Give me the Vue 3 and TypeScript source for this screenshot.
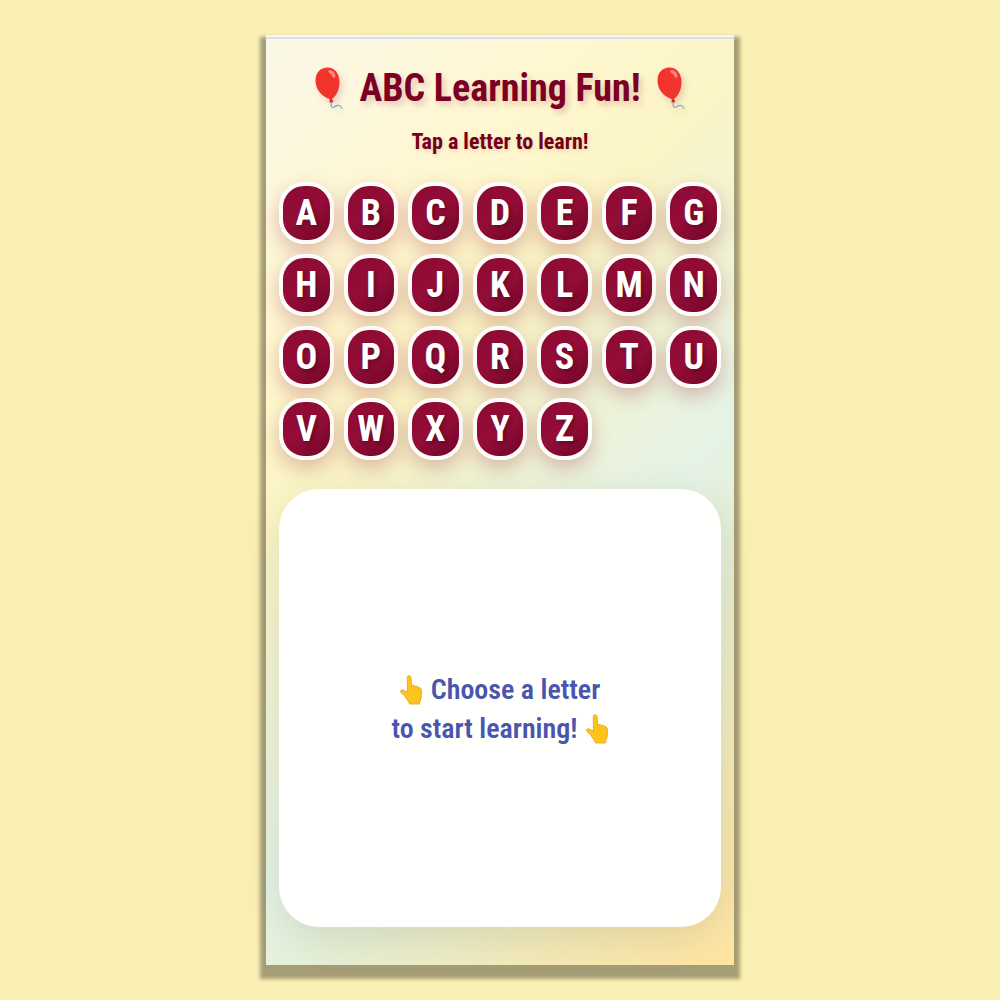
<script setup lang="ts">
import { ref } from 'vue'

const letters: string[] = 'ABCDEFGHIJKLMNOPQRSTUVWXYZ'.split('')
const selected = ref<string | null>(null)
</script>

<template>
  <main class="page">
    <div class="panel">
      <header class="header">
        <h1 class="title">
          <svg class="balloon" viewBox="0 0 28 42" aria-hidden="true">
            <path d="M14.800 31.500 L16.800 31.500 L18.500 35 L14.500 35.800 Z" fill="#d32a25" />
            <path d="M12.500 0.500 C19.500 0.500 24.500 6.500 24.500 15 C24.500 23 21 30 16 32.500 C8 30.500 0.500 23.500 0.500 13.500 C0.500 5.500 5.500 0.500 12.500 0.500 Z" fill="#f2352c" />
            <path d="M13.500 3.500 C17 2.600 20.500 5.500 20.300 9.500 C20 11.500 18 11 17.300 9 C16.500 6.500 12 5.500 13.500 3.500 Z" fill="#ff8b80" />
            <path d="M16.500 35.500 C15.500 39 16.500 41 19 40 C21 39 22 37.800 24 38.500 C26 39.200 26 40.500 27 41.200" fill="none" stroke="#6da9d4" stroke-width="1.200" stroke-linecap="round" />
          </svg>
          <span>ABC Learning Fun!</span>
          <svg class="balloon" viewBox="0 0 28 42" aria-hidden="true">
            <path d="M14.800 31.500 L16.800 31.500 L18.500 35 L14.500 35.800 Z" fill="#d32a25" />
            <path d="M12.500 0.500 C19.500 0.500 24.500 6.500 24.500 15 C24.500 23 21 30 16 32.500 C8 30.500 0.500 23.500 0.500 13.500 C0.500 5.500 5.500 0.500 12.500 0.500 Z" fill="#f2352c" />
            <path d="M13.500 3.500 C17 2.600 20.500 5.500 20.300 9.500 C20 11.500 18 11 17.300 9 C16.500 6.500 12 5.500 13.500 3.500 Z" fill="#ff8b80" />
            <path d="M16.500 35.500 C15.500 39 16.500 41 19 40 C21 39 22 37.800 24 38.500 C26 39.200 26 40.500 27 41.200" fill="none" stroke="#6da9d4" stroke-width="1.200" stroke-linecap="round" />
          </svg>
        </h1>
        <p class="subtitle">Tap a letter to learn!</p>
      </header>

      <div class="grid">
        <button
          v-for="letter in letters"
          :key="letter"
          type="button"
          class="letter"
          @click="selected = letter"
        >
          {{ letter }}
        </button>
      </div>

      <section class="card" aria-live="polite">
        <p v-if="selected" class="chosen">{{ selected }}</p>
        <p v-else class="prompt">
          <span class="line">
            <svg class="hand" viewBox="0 0 22 30" aria-hidden="true">
              <path d="M7.300 2.500 C7.300 0.300 10.800 0.300 11 2.500 L11.700 11 C14 10 15.200 10.600 15.600 11.600 C17.500 11 18.600 11.800 18.900 12.800 C20.700 12.800 21.500 14 21.500 16 L21.200 22 C21 24.500 19.800 25.500 19.500 29 L9.500 29 C9 26.500 6.500 24.500 4.500 20.500 L1 17.500 C-0.200 16 1.200 14.300 3 15 L7.500 17.200 Z" fill="#ffc41c" stroke="#e2a019" stroke-width="0.800" stroke-linejoin="round" />
              <path d="M11.700 11 L11.900 14 M15.600 11.600 L15.700 14 M18.900 12.800 L18.900 15" fill="none" stroke="#efae1b" stroke-width="0.700" stroke-linecap="round" />
            </svg>
            <span>Choose a letter</span>
          </span>
          <span class="line">
            <span>to start learning!</span>
            <svg class="hand" viewBox="0 0 22 30" aria-hidden="true">
              <path d="M7.300 2.500 C7.300 0.300 10.800 0.300 11 2.500 L11.700 11 C14 10 15.200 10.600 15.600 11.600 C17.500 11 18.600 11.800 18.900 12.800 C20.700 12.800 21.500 14 21.500 16 L21.200 22 C21 24.500 19.800 25.500 19.500 29 L9.500 29 C9 26.500 6.500 24.500 4.500 20.500 L1 17.500 C-0.200 16 1.200 14.300 3 15 L7.500 17.200 Z" fill="#ffc41c" stroke="#e2a019" stroke-width="0.800" stroke-linejoin="round" />
              <path d="M11.700 11 L11.900 14 M15.600 11.600 L15.700 14 M18.900 12.800 L18.900 15" fill="none" stroke="#efae1b" stroke-width="0.700" stroke-linecap="round" />
            </svg>
          </span>
        </p>
      </section>
    </div>
  </main>
</template>

<style>
body {
  margin: 0;
  background: #fbf0b4;
}
</style>

<style scoped>
.page {
  box-sizing: border-box;
  min-height: 100vh;
  padding: 35px 12px;
  background: #fbf0b4;
  font-family: "Roboto Condensed", "Roboto", sans-serif;
}

.panel {
  box-sizing: border-box;
  max-width: 468px;
  margin: 0 auto;
  padding: 26px 13px 38px;
  border-top: 2px solid #f6f5f8;
  background: linear-gradient(135deg, #fbf8e8 0%, #fff7cf 24%, #fbf5c6 36%, #e5f3e6 61%, #e6efd4 71%, #f3eab8 85%, #ffe4a0 100%);
  box-shadow: inset 0 2px #dedde8, 0 8px 4px 6px #a49d75;
}

.header {
  text-align: center;
  color: #7c0023;
}

.title {
  display: flex;
  align-items: center;
  justify-content: center;
  gap: 16px;
  margin: 0;
  font-size: 38px;
  font-weight: 700;
  line-height: 50px;
  white-space: nowrap;
  text-shadow: 3px 4px 6px rgba(128, 0, 32, 0.2);
}

.balloon {
  flex: none;
  width: 28px;
  height: 42px;
  filter: drop-shadow(3px 4px 3px rgba(128, 0, 32, 0.15));
}

.subtitle {
  margin: 16px 0 0;
  color: #740018;
  font-size: 22px;
  font-weight: 700;
  line-height: 26px;
  text-shadow: 1px 2px 4px rgba(128, 0, 32, 0.15);
}

.grid {
  display: grid;
  grid-template-columns: repeat(7, 1fr);
  gap: 10px;
  margin-top: 27px;
}

.letter {
  display: flex;
  align-items: center;
  justify-content: center;
  height: 62px;
  padding: 0;
  border: 4px solid #fffdfb;
  border-radius: 25px;
  background: linear-gradient(145deg, #8a0a32 0%, #940d37 50%, #6c0427 100%) border-box;
  box-shadow: 0 8px 20px rgba(128, 0, 32, 0.25);
  color: #fff;
  font-family: inherit;
  font-size: 36px;
  font-weight: 700;
  line-height: 44px;
  text-shadow: 2px 2px 4px rgba(0, 0, 0, 0.3);
  cursor: pointer;
}

.card {
  display: flex;
  align-items: center;
  justify-content: center;
  min-height: 438px;
  margin-top: 29px;
  border-radius: 40px;
  background: #fffffe;
  box-shadow: 0 10px 40px rgba(0, 0, 0, 0.1);
}

.prompt {
  margin: 0;
  padding-top: 2px;
  color: #4a55ae;
  font-size: 28px;
  font-weight: 600;
  line-height: 39px;
}

.line {
  display: flex;
  align-items: center;
  justify-content: center;
  gap: 9px;
}

.hand {
  flex: none;
  width: 22px;
  height: 30px;
}

.chosen {
  margin: 0;
  color: #800020;
  font-size: 200px;
  font-weight: 700;
}
</style>
